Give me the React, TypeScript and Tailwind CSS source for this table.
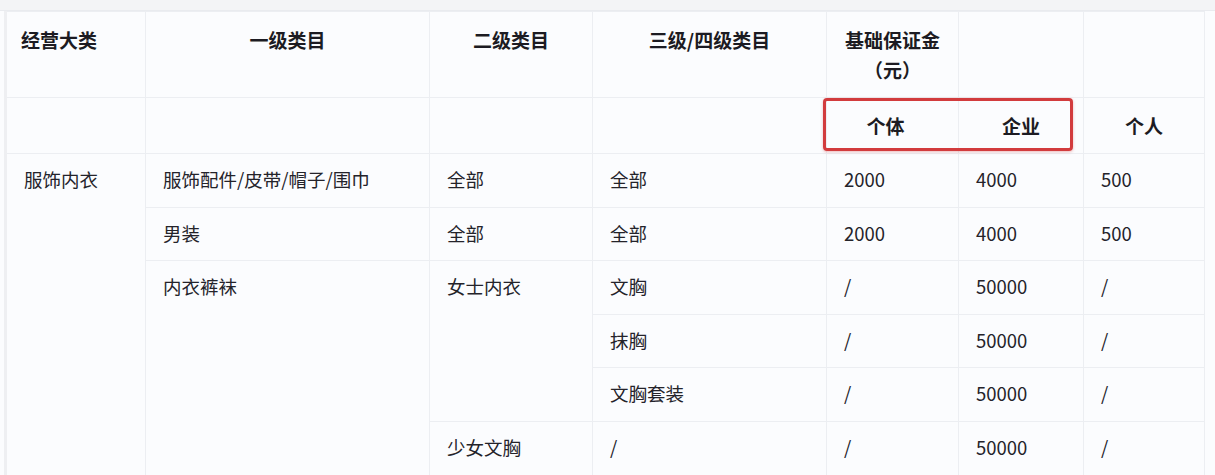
import React from "react";

const font = { fontFamily: '"Noto Sans CJK SC", "Noto Sans", sans-serif' };

export default function App() {
  const td = "border border-[#eceef2] align-top pt-[11px] pl-[17px] text-[18.5px] leading-[28px] text-[#24232a]";
  const thBase = "border border-[#eceef2] text-[19px] font-bold leading-[30px] text-[#1c1b22] text-center";
  const th = thBase + " align-top";
  const thM = thBase + " align-middle";
  return (
    <div className="w-[1215px] h-[475px] overflow-hidden bg-[#fbfcfe] relative" style={font}>
      <div className="h-[11px] bg-[#f3f4f6] border-b border-[#e9ebef]" />
      <div className="pl-[4px] pr-[12px]">
        <table className="border-collapse table-fixed w-[1199px] border-l-[3px] border-l-[#eeeff2]">
          <colgroup>
            <col className="w-[140px]" />
            <col className="w-[284px]" />
            <col className="w-[163px]" />
            <col className="w-[234px]" />
            <col className="w-[132px]" />
            <col className="w-[125px]" />
            <col className="w-[121px]" />
          </colgroup>
          <thead>
            <tr className="h-[86px]">
              <th className={th + " text-left pl-[14px] pt-[13px]"}>经营大类</th>
              <th className={th + " pt-[13px]"}>一级类目</th>
              <th className={th + " pt-[13px]"}>二级类目</th>
              <th className={th + " pt-[13px]"}>三级/四级类目</th>
              <th className={th + " pt-[13px]"}>
                基础保证金
                <br />
                （元）
              </th>
              <th className={th}></th>
              <th className={th}></th>
            </tr>
            <tr className="h-[56px]">
              <th className={thM}></th>
              <th className={thM}></th>
              <th className={thM}></th>
              <th className={thM}></th>
              <th className={thM + " pr-[14px]"}>个体</th>
              <th className={thM}>企业</th>
              <th className={thM}>个人</th>
            </tr>
          </thead>
          <tbody>
            <tr className="h-[54px]">
              <td className={td + " pl-[14px]"} rowSpan={6}>服饰内衣</td>
              <td className={td}>服饰配件/皮带/帽子/围巾</td>
              <td className={td}>全部</td>
              <td className={td}>全部</td>
              <td className={td}>2000</td>
              <td className={td}>4000</td>
              <td className={td}>500</td>
            </tr>
            <tr className="h-[53px]">
              <td className={td}>男装</td>
              <td className={td}>全部</td>
              <td className={td}>全部</td>
              <td className={td}>2000</td>
              <td className={td}>4000</td>
              <td className={td}>500</td>
            </tr>
            <tr className="h-[54px]">
              <td className={td} rowSpan={4}>内衣裤袜</td>
              <td className={td} rowSpan={3}>女士内衣</td>
              <td className={td}>文胸</td>
              <td className={td}>/</td>
              <td className={td}>50000</td>
              <td className={td}>/</td>
            </tr>
            <tr className="h-[53px]">
              <td className={td}>抹胸</td>
              <td className={td}>/</td>
              <td className={td}>50000</td>
              <td className={td}>/</td>
            </tr>
            <tr className="h-[54px]">
              <td className={td}>文胸套装</td>
              <td className={td}>/</td>
              <td className={td}>50000</td>
              <td className={td}>/</td>
            </tr>
            <tr className="h-[54px]">
              <td className={td}>少女文胸</td>
              <td className={td}>/</td>
              <td className={td}>/</td>
              <td className={td}>50000</td>
              <td className={td}>/</td>
            </tr>
          </tbody>
        </table>
      </div>
      <div className="absolute left-[823px] top-[98px] w-[250px] h-[53px] border-[3px] border-[#d23b3d] rounded-[4px] shadow-[0_1px_3px_rgba(210,59,61,0.35)]" />
    </div>
  );
}
